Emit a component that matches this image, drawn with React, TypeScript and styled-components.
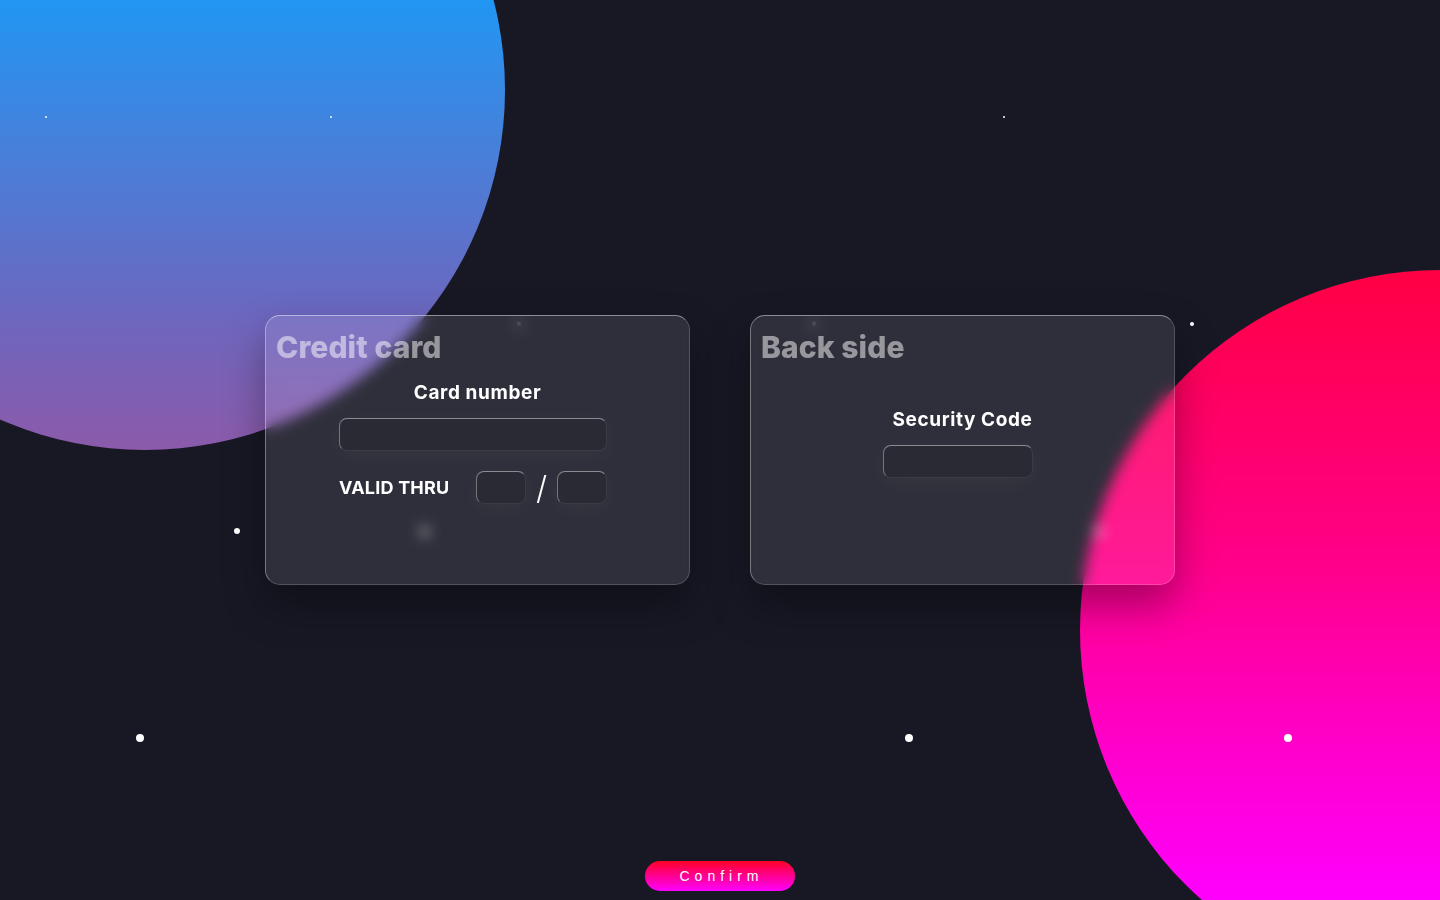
import React from "react";
import styled, { createGlobalStyle } from "styled-components";

const GlobalStyle = createGlobalStyle`
  * { box-sizing: border-box; }
  html, body { margin: 0; padding: 0; }
  body {
    background: #181825;
    font-family: "Inter", "Open Sans", sans-serif;
    overflow: hidden;
  }
`;

const Page = styled.div`
  position: relative;
  width: 1440px;
  height: 900px;
  overflow: hidden;
  background: #181825;
  display: flex;
  flex-direction: column;
  align-items: center;
`;

const Blob = styled.div<{ $x: number; $y: number; $r: number; $bg: string }>`
  position: absolute;
  left: ${(p) => p.$x - p.$r}px;
  top: ${(p) => p.$y - p.$r}px;
  width: ${(p) => p.$r * 2}px;
  height: ${(p) => p.$r * 2}px;
  border-radius: 50%;
  background: ${(p) => p.$bg};
`;

const Star = styled.div<{ $x: number; $y: number; $s: number }>`
  position: absolute;
  left: ${(p) => p.$x - p.$s / 2}px;
  top: ${(p) => p.$y - p.$s / 2}px;
  width: ${(p) => p.$s}px;
  height: ${(p) => p.$s}px;
  border-radius: 50%;
  background: #fff;
`;

const Cards = styled.div`
  position: relative;
  z-index: 2;
  margin-top: 315px;
  display: flex;
  gap: 60px;
`;

const Card = styled.section`
  width: 425px;
  height: 270px;
  border-radius: 15px;
  background: rgba(255, 255, 255, 0.1);
  backdrop-filter: blur(7px);
  -webkit-backdrop-filter: blur(7px);
  border: 1px solid rgba(255, 255, 255, 0.18);
  border-top-color: rgba(255, 255, 255, 0.45);
  border-left-color: rgba(255, 255, 255, 0.35);
  box-shadow: 0 20px 40px rgba(0, 0, 0, 0.35);
  padding: 12px 10px 10px 10px;
  display: flex;
  flex-direction: column;
`;

const Title = styled.h2`
  margin: 0;
  font-size: 30px;
  line-height: 38px;
  font-weight: 800;
  letter-spacing: 0.1px;
  color: rgba(255, 255, 255, 0.5);
`;

const Body = styled.div`
  flex: 1;
  display: flex;
  flex-direction: column;
  align-items: center;
  justify-content: center;
  padding-bottom: 54px;
`;

const Label = styled.div`
  color: #fff;
  font-size: 19px;
  font-weight: 700;
  line-height: 22px;
  letter-spacing: 0.6px;
  margin-bottom: 14px;
`;

const Inputs = styled.div<{ $w: number }>`
  width: ${(p) => p.$w}px;
  margin-right: 9px;
  display: flex;
  flex-direction: column;
`;

const Field = styled.div<{ $w: number }>`
  width: ${(p) => p.$w}px;
  height: 33px;
  border-radius: 8px;
  background: rgba(0, 0, 0, 0.08);
  border: 1px solid rgba(255, 255, 255, 0.08);
  border-top-color: rgba(255, 255, 255, 0.45);
  border-left-color: rgba(255, 255, 255, 0.35);
  box-shadow: 0 5px 25px rgba(255, 255, 255, 0.04);
`;

const Row = styled.div`
  width: 100%;
  margin-top: 20px;
  display: flex;
  align-items: center;
`;

const RowLabel = styled.div`
  color: #fff;
  font-size: 18px;
  font-weight: 700;
  letter-spacing: 0.2px;
  flex: 1;
`;

const Slash = styled.span`
  color: #fff;
  font-size: 32px;
  font-weight: 300;
  width: 31px;
  text-align: center;
  line-height: 33px;
`;

const Footer = styled.div`
  position: relative;
  z-index: 2;
  margin-top: auto;
  margin-bottom: 9px;
`;

const Confirm = styled.button`
  width: 150px;
  height: 30px;
  border: none;
  border-radius: 15px;
  background: linear-gradient(#ff0026, #ff00ff);
  color: #fff;
  font-family: "Liberation Sans", Arial, sans-serif;
  font-size: 14px;
  letter-spacing: 5px;
  padding: 0 0 0 3px;
  cursor: pointer;
`;

const stars = [
  { x: 46, y: 117, s: 2 },
  { x: 331, y: 117, s: 2 },
  { x: 1004, y: 117, s: 2 },
  { x: 519, y: 324, s: 4 },
  { x: 814, y: 324, s: 4 },
  { x: 1192, y: 324, s: 4 },
  { x: 237, y: 531, s: 6 },
  { x: 424, y: 531, s: 7 },
  { x: 1098, y: 531, s: 7 },
  { x: 140, y: 738, s: 8 },
  { x: 909, y: 738, s: 8 },
  { x: 1288, y: 738, s: 8 },
];

export default function App() {
  return (
    <>
      <GlobalStyle />
      <Page>
        <Blob
          $x={145}
          $y={90}
          $r={360}
          $bg="linear-gradient(#1aa0ff 0%, #2196f3 37.5%, #4a7ed8 60%, #6a68c0 80%, #8c5aaa 100%)"
        />
        <Blob
          $x={1440}
          $y={630}
          $r={360}
          $bg="linear-gradient(#ff0044 0%, #ff0088 40%, #ff00c8 65%, #ff00ff 88%, #ff00ff 100%)"
        />
        {stars.map((s, i) => (
          <Star key={i} $x={s.x} $y={s.y} $s={s.s} />
        ))}
        <Cards>
          <Card>
            <Title>Credit card</Title>
            <Body>
              <Label>Card number</Label>
              <Inputs $w={268}>
                <Field $w={268} />
                <Row>
                  <RowLabel>VALID THRU</RowLabel>
                  <Field $w={50} />
                  <Slash>/</Slash>
                  <Field $w={50} />
                </Row>
              </Inputs>
            </Body>
          </Card>
          <Card>
            <Title>Back side</Title>
            <Body>
              <Label>Security Code</Label>
              <Inputs $w={150}>
                <Field $w={150} />
              </Inputs>
            </Body>
          </Card>
        </Cards>
        <Footer>
          <Confirm>Confirm</Confirm>
        </Footer>
      </Page>
    </>
  );
}
